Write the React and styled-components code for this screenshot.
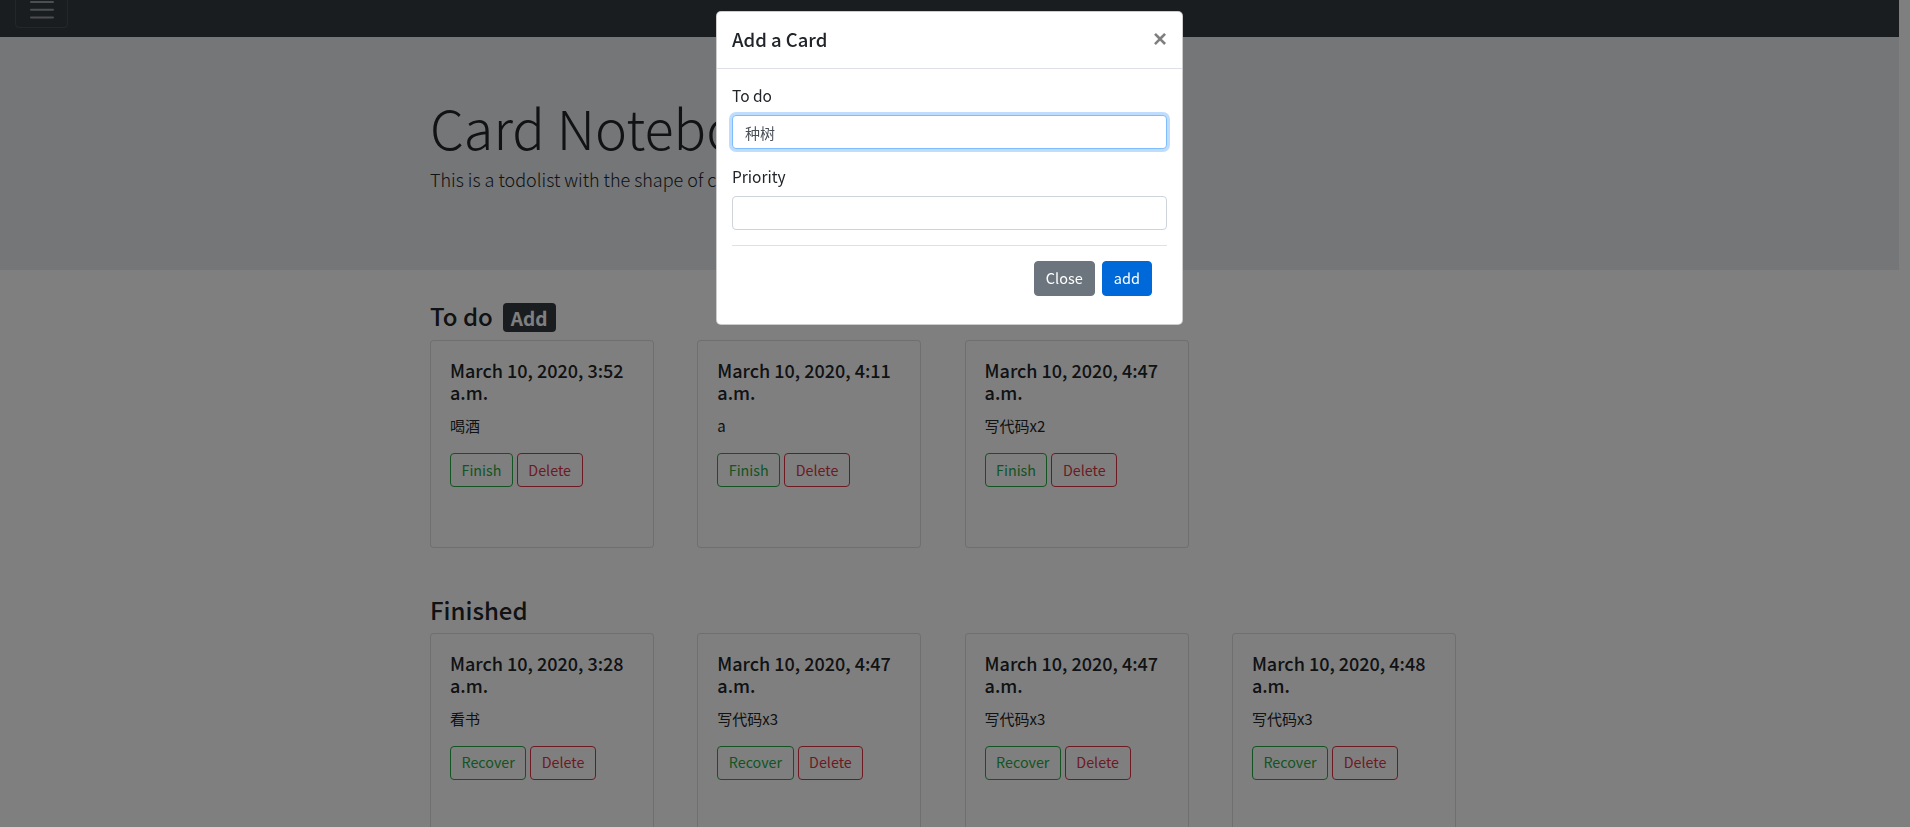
import React from "react";
import styled, { createGlobalStyle } from "styled-components";

const todo = [
  { time: "March 10, 2020, 3:52 a.m.", text: "喝酒" },
  { time: "March 10, 2020, 4:11 a.m.", text: "a" },
  { time: "March 10, 2020, 4:47 a.m.", text: "写代码x2" },
];

const finished = [
  { time: "March 10, 2020, 3:28 a.m.", text: "看书" },
  { time: "March 10, 2020, 4:47 a.m.", text: "写代码x3" },
  { time: "March 10, 2020, 4:47 a.m.", text: "写代码x3" },
  { time: "March 10, 2020, 4:48 a.m.", text: "写代码x3" },
];

export default function App() {
  return (
    <>
      <GlobalStyle />
      <Navbar>
        <Toggler aria-label="toggle navigation">
          <svg width="30" height="30" viewBox="0 0 30 30">
            <path
              d="M4 8h22M4 15.7h22M4 23.4h22"
              stroke="rgba(255,255,255,0.5)"
              strokeWidth="2"
              strokeLinecap="round"
            />
          </svg>
        </Toggler>
      </Navbar>

      <Jumbotron>
        <Container>
          <Title>Card Notebook</Title>
          <Lead>This is a todolist with the shape of cards.</Lead>
        </Container>
      </Jumbotron>

      <Container>
        <Section>
          <SectionHeading>
            To do <Badge>Add</Badge>
          </SectionHeading>
          <CardGrid>
            {todo.map((c, i) => (
              <Card key={i}>
                <CardTitle>{c.time}</CardTitle>
                <CardText>{c.text}</CardText>
                <Actions>
                  <OutlineButton $color="#28a745">Finish</OutlineButton>
                  <OutlineButton $color="#dc3545">Delete</OutlineButton>
                </Actions>
              </Card>
            ))}
          </CardGrid>
        </Section>

        <Section>
          <SectionHeading>Finished</SectionHeading>
          <CardGrid>
            {finished.map((c, i) => (
              <Card key={i}>
                <CardTitle>{c.time}</CardTitle>
                <CardText>{c.text}</CardText>
                <Actions>
                  <OutlineButton $color="#28a745">Recover</OutlineButton>
                  <OutlineButton $color="#dc3545">Delete</OutlineButton>
                </Actions>
              </Card>
            ))}
          </CardGrid>
        </Section>
      </Container>

      <Backdrop />
      <ModalLayer>
        <Dialog>
          <ModalHeader>
            <ModalTitle>Add a Card</ModalTitle>
            <CloseX aria-label="close">×</CloseX>
          </ModalHeader>
          <ModalBody>
            <FormGroup>
              <Label>To do</Label>
              <Input $focus defaultValue="种树" />
            </FormGroup>
            <FormGroup>
              <Label>Priority</Label>
              <Input />
            </FormGroup>
            <ModalFooter>
              <ModalButton type="button" $bg="#6c757d">
                Close
              </ModalButton>
              <ModalButton type="button" $bg="#0069d9">
                add
              </ModalButton>
            </ModalFooter>
          </ModalBody>
        </Dialog>
      </ModalLayer>
    </>
  );
}

const GlobalStyle = createGlobalStyle`
  * { box-sizing: border-box; }
  html, body {
    margin: 0;
    height: 100%;
    overflow: hidden;
  }
  body {
    padding-right: 11px;
    background: #fff;
    color: #212529;
    font-family: "Noto Sans CJK SC", "Noto Sans", sans-serif;
  }
`;

const Navbar = styled.nav`
  height: 37px;
  display: flex;
  align-items: flex-end;
  padding: 0 0 9px 15px;
  background: #343a40;
  overflow: hidden;
`;

const Toggler = styled.button`
  flex-shrink: 0;
  width: 53px;
  height: 38px;
  padding: 0;
  display: flex;
  align-items: center;
  justify-content: center;
  background: transparent;
  border: 1px solid rgba(255, 255, 255, 0.1);
  border-radius: 4px;
`;

const Jumbotron = styled.header`
  background: #e9ecef;
  padding: 58px 0 76px;
  margin-bottom: 32px;
`;

const Container = styled.div`
  width: 1039px;
  margin: 0 auto;
`;

const Title = styled.h1`
  margin: 0 0 4px;
  font-size: 54px;
  font-weight: 300;
  line-height: 1.2;
`;

const Lead = styled.p`
  margin: 0;
  font-size: 18px;
  font-weight: 300;
  line-height: 30px;
`;

const Section = styled.section`
  & + & {
    margin-top: 48px;
  }
`;

const SectionHeading = styled.h4`
  display: flex;
  align-items: baseline;
  gap: 10px;
  margin: 0 0 8px;
  font-size: 24px;
  font-weight: 500;
  line-height: 1.2;
`;

const Badge = styled.span`
  display: inline-block;
  padding: 5px 8px;
  font-size: 19px;
  font-weight: 700;
  line-height: 19px;
  color: #fff;
  background: #343a40;
  border-radius: 4px;
`;

const CardGrid = styled.div`
  display: grid;
  grid-template-columns: repeat(4, 224px);
  column-gap: 43.3px;
`;

const Card = styled.div`
  height: 208px;
  padding: 18px 19px;
  background: #fff;
  border: 1px solid rgba(0, 0, 0, 0.125);
  border-radius: 4px;
`;

const CardTitle = styled.h5`
  margin: 0 0 12px;
  font-size: 18px;
  font-weight: 500;
  line-height: 22px;
`;

const CardText = styled.p`
  margin: 0 0 17px;
  font-size: 15px;
  line-height: 21px;
`;

const Actions = styled.div`
  display: flex;
  gap: 4px;
`;

const OutlineButton = styled.button`
  height: 34px;
  padding: 0 10.5px;
  font-family: inherit;
  font-size: 14.3px;
  line-height: 1;
  color: ${(p) => p.$color};
  background: transparent;
  border: 1px solid ${(p) => p.$color};
  border-radius: 4px;
`;

const Backdrop = styled.div`
  position: fixed;
  inset: 0;
  background: rgba(0, 0, 0, 0.5);
`;

const ModalLayer = styled.div`
  position: fixed;
  inset: 0;
  padding-right: 11px;
`;

const Dialog = styled.div`
  width: 467px;
  margin: 11px auto 0;
  background: #fff;
  border: 1px solid rgba(0, 0, 0, 0.2);
  border-radius: 5px;
`;

const ModalHeader = styled.div`
  display: flex;
  align-items: flex-start;
  justify-content: space-between;
  padding: 15px 15px 17px;
  border-bottom: 1px solid #dee2e6;
`;

const ModalTitle = styled.h5`
  margin: 0;
  font-size: 18.5px;
  font-weight: 500;
  line-height: 24px;
`;

const CloseX = styled.button`
  padding: 0;
  border: 0;
  background: transparent;
  font-family: "Liberation Sans", sans-serif;
  font-size: 24px;
  font-weight: 700;
  line-height: 24px;
  color: #000;
  opacity: 0.5;
`;

const ModalBody = styled.form`
  padding: 14px 15px 15px;
`;

const FormGroup = styled.div`
  margin-bottom: 15px;
`;

const Label = styled.label`
  display: block;
  margin-bottom: 8px;
  font-size: 15.5px;
  line-height: 24px;
`;

const Input = styled.input`
  display: block;
  width: 100%;
  height: 34px;
  padding: 0 12px;
  font-family: inherit;
  font-size: 15px;
  color: #495057;
  background: #fff;
  border: 1px solid ${(p) => (p.$focus ? "#80bdff" : "#ced4da")};
  border-radius: 4px;
  box-shadow: ${(p) => (p.$focus ? "0 0 0 3px rgba(0, 123, 255, 0.25)" : "none")};
  outline: none;
`;

const ModalFooter = styled.div`
  display: flex;
  justify-content: flex-end;
  gap: 7px;
  padding: 15px 15px 13px;
  border-top: 1px solid #dee2e6;
`;

const ModalButton = styled.button`
  height: 35px;
  padding: 0 11px;
  font-family: inherit;
  font-size: 14.5px;
  line-height: 1;
  color: #fff;
  background: ${(p) => p.$bg};
  border: 1px solid ${(p) => p.$bg};
  border-radius: 4px;
`;
